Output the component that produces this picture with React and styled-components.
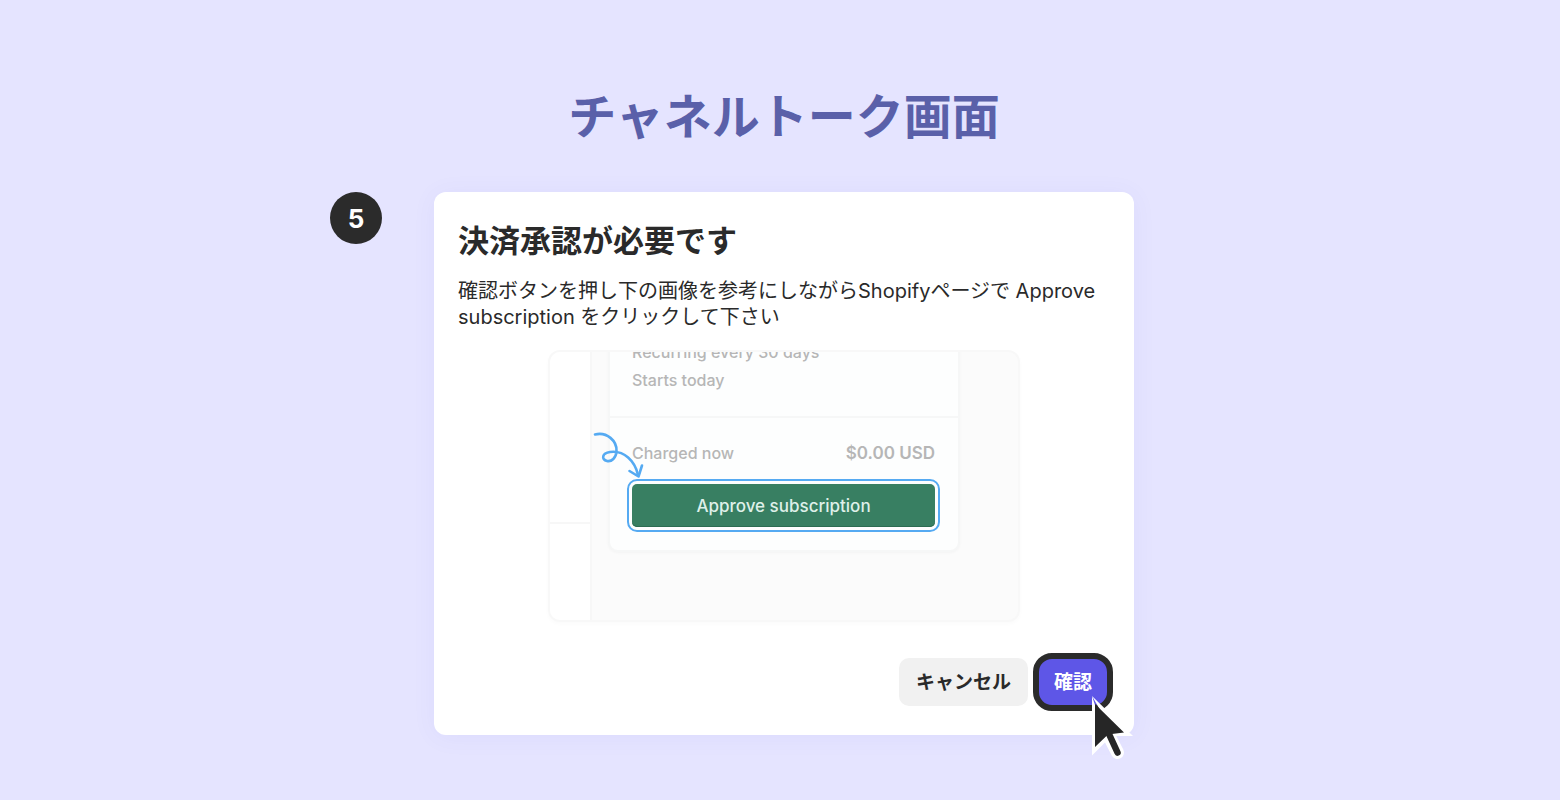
import React from "react";
import styled, { createGlobalStyle } from "styled-components";

const GlobalStyle = createGlobalStyle`
  *, *::before, *::after { box-sizing: border-box; }
  body {
    margin: 0;
    background: #e5e4ff;
    color: #2a2a2a;
    font-family: Inter, "Noto Sans CJK JP", sans-serif;
  }
  h1, h2, p { margin: 0; }
  button { font-family: inherit; cursor: pointer; }
`;

const Page = styled.main`
  min-height: 100vh;
  padding: 85px 0 64px 8px;
  display: flex;
  flex-direction: column;
  gap: 43px;
`;

const Title = styled.h1`
  color: #5a60a9;
  font-size: 48px;
  font-weight: 700;
  line-height: 64px;
  text-align: center;
`;

const Step = styled.section`
  display: grid;
  grid-template-columns: 1fr minmax(0, 700px) 1fr;
  column-gap: 52px;
  align-items: start;
`;

const StepNumber = styled.span`
  justify-self: end;
  display: grid;
  place-items: center;
  width: 52px;
  height: 52px;
  padding-top: 2px;
  border-radius: 50%;
  background: #2b2b2b;
  color: #fff;
  font-size: 26px;
  font-weight: 700;
  line-height: 32px;
`;

const Dialog = styled.div`
  display: flex;
  flex-direction: column;
  padding: 25px 24px 24px;
  border-radius: 12px;
  background: #fff;
  box-shadow: 0 2px 24px rgba(90, 80, 220, 0.06);
`;

const DialogTitle = styled.h2`
  font-size: 31px;
  font-weight: 700;
  line-height: 48px;
`;

const Description = styled.p`
  margin-top: 13px;
  font-size: 20px;
  line-height: 26px;
`;

const Preview = styled.div`
  position: relative;
  align-self: center;
  display: flex;
  width: 100%;
  max-width: 472px;
  height: 272px;
  margin-top: 20px;
  overflow: hidden;
  border: 2px solid #f8f8f8;
  border-radius: 12px;
  background: #fbfbfb;
  box-shadow: 0 2px 4px rgba(0, 0, 0, 0.02);
`;

const PreviewSide = styled.div`
  flex: 0 0 42px;
  display: grid;
  grid-template-rows: 170px 1fr;
  border-right: 2px solid #f7f7f7;
  background: #fff;
`;

const SideBlock = styled.div`
  & + & { border-top: 2px solid #f7f7f7; }
`;

const PreviewMain = styled.div`
  flex: 1;
  display: flex;
  flex-direction: column;
  justify-content: flex-end;
  padding: 0 58px 68px 16px;
`;

const Bill = styled.div`
  flex: none;
  border: 2px solid #f6f7f7;
  border-radius: 10px;
  background: #fdfefe;
  color: #b6b6b6;
  font-size: 16px;
  font-weight: 500;
  line-height: 28px;
  box-shadow: 0 1px 3px rgba(0, 0, 0, 0.03);
`;

const BillTerms = styled.div`
  padding: 20px 22px 22px;
`;

const BillCharge = styled.div`
  display: flex;
  flex-direction: column;
  gap: 17px;
  padding: 21px 23px 23px 22px;
  border-top: 2px solid #f6f7f7;
`;

const BillRow = styled.div`
  display: flex;
  justify-content: space-between;
`;

const Amount = styled.strong`
  font-size: 17px;
  font-weight: 600;
`;

const ApproveButton = styled.button`
  height: 43px;
  padding: 0;
  border: 0;
  border-radius: 5px;
  outline: 2px solid #55aaf2;
  outline-offset: 3px;
  background: #387f62;
  color: #dff0e9;
  font-size: 17px;
  font-weight: 500;
  line-height: 24px;
  box-shadow: inset 0 -1px 0 #2c6c52;
`;

const CurlArrow = styled.svg`
  position: absolute;
  left: 43px;
  top: 78px;
`;

const Actions = styled.div`
  display: flex;
  justify-content: flex-end;
  align-items: center;
  gap: 5px;
  margin: 31px -3px 0 0;
`;

const ActionButton = styled.button`
  position: relative;
  height: ${(p) => (p.$primary ? 58 : 48)}px;
  padding: 1px ${(p) => (p.$primary ? 15 : 17)}px 0;
  border: ${(p) => (p.$primary ? "6px solid #2b2b2b" : "0")};
  border-radius: ${(p) => (p.$primary ? 19 : 10)}px;
  background: ${(p) => (p.$primary ? "#5e56e7" : "#f1f1f1")};
  color: ${(p) => (p.$primary ? "#fff" : "#2a2a2a")};
  font-size: 19px;
  font-weight: 700;
  line-height: 28px;
`;

const Pointer = styled.svg`
  position: absolute;
  left: 52px;
  top: 35px;
`;

export default function App() {
  return (
    <>
      <GlobalStyle />
      <Page lang="ja">
        <Title>チャネルトーク画面</Title>
        <Step>
          <StepNumber>5</StepNumber>
          <Dialog role="dialog" aria-labelledby="dialog-title">
            <DialogTitle id="dialog-title">決済承認が必要です</DialogTitle>
            <Description>
              確認ボタンを押し下の画像を参考にしながらShopifyページで Approve
              subscription をクリックして下さい
            </Description>
            <Preview>
              <PreviewSide>
                <SideBlock />
                <SideBlock />
              </PreviewSide>
              <PreviewMain>
                <Bill>
                  <BillTerms>
                    <div>Recurring every 30 days</div>
                    <div>Starts today</div>
                  </BillTerms>
                  <BillCharge>
                    <BillRow>
                      <span>Charged now</span>
                      <Amount>$0.00 USD</Amount>
                    </BillRow>
                    <ApproveButton type="button">Approve subscription</ApproveButton>
                  </BillCharge>
                </Bill>
              </PreviewMain>
              <CurlArrow width="52" height="50" viewBox="0 0 52 50" fill="none" stroke="#55aaf2" strokeWidth="2.6" strokeLinecap="round" strokeLinejoin="round" aria-hidden="true">
                <path d="M2 4.500C14 1.500 24 11 23.500 21C23.200 28 18.500 32 14 31C8 29.500 9 23 17 22C31 20 42 31 45 45" />
                <path d="M36.500 41L45.500 46.500L49 35.500" />
              </CurlArrow>
            </Preview>
            <Actions>
              <ActionButton type="button">キャンセル</ActionButton>
              <ActionButton type="button" $primary>
                確認
                <Pointer width="46" height="68" viewBox="0 0 46 68" aria-hidden="true">
                  <path d="M1 2V61.500L14.500 48L20 59.500" fill="#fff" />
                  <path d="M1 2L42 42H24" fill="#fff" />
                  <path d="M18 42L26.500 58.500" stroke="#fff" strokeWidth="13" strokeLinecap="round" />
                  <path d="M4 10V53L17 40.500L33 38.500Z" fill="#262626" />
                  <path d="M18 40L26.500 58.500" stroke="#262626" strokeWidth="6.500" strokeLinecap="round" />
                </Pointer>
              </ActionButton>
            </Actions>
          </Dialog>
        </Step>
      </Page>
    </>
  );
}
